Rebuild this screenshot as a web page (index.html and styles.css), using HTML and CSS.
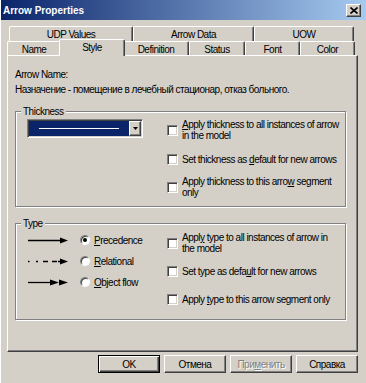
FILE: index.html
```html
<!DOCTYPE html>
<html lang="ru">
<head>
    <meta charset="UTF-8">
    <title>Arrow Properties</title>
    <link rel="stylesheet" href="styles.css">
</head>
<body>
    <div class="window">
        <div class="titlebar">
            <span class="title">Arrow Properties</span>
            <span class="close-btn">
                <svg width="8" height="7" viewBox="0 0 8 7"><path d="M0.5 0.5L7.5 6.5M7.5 0.5L0.5 6.5" stroke="#000" stroke-width="1.6"/></svg>
            </span>
        </div>

        <div class="tabs">
            <div class="tab-row back-row">
                <div class="tab">UDP Values</div>
                <div class="tab">Arrow Data</div>
                <div class="tab">UOW</div>
            </div>
            <div class="tab-row front-row">
                <div class="tab">Name</div>
                <div class="tab active">Style</div>
                <div class="tab">Definition</div>
                <div class="tab">Status</div>
                <div class="tab">Font</div>
                <div class="tab">Color</div>
            </div>
        </div>

        <div class="page">
            <div class="field-label">Arrow Name:</div>
            <div class="field-value">Назначение - помещение в лечебный стационар, отказ больного.</div>

            <div class="group group-thickness">
                <div class="group-title">Thickness</div>
                <div class="group-body">
                    <div class="combo">
                        <div class="combo-value"><span class="line-sample"></span></div>
                        <div class="combo-btn">
                            <svg width="5" height="3" viewBox="0 0 5 3"><path d="M0 0H5L2.5 3Z" fill="#000"/></svg>
                        </div>
                    </div>
                    <div class="checks">
                        <div class="check row-1"><span class="box"></span><span class="check-text"><u>A</u>pply thickness to all instances of arrow<br>in the model</span></div>
                        <div class="check row-2"><span class="box"></span><span class="check-text">Set thickness as <u>d</u>efault for new arrows</span></div>
                        <div class="check row-3"><span class="box"></span><span class="check-text">Apply thickness to this arro<u>w</u> segment<br>only</span></div>
                    </div>
                </div>
            </div>

            <div class="group group-type">
                <div class="group-title">Type</div>
                <div class="group-body">
                    <div class="arrow-types">
                        <div class="arrow-row">
                            <svg class="arrow" width="41" height="9" viewBox="0 0 41 9">
                                <path d="M0 4.5H33" stroke="#000" stroke-width="1.3"/>
                                <path d="M32 1.5L40 4.5L32 7.5Z" fill="#000"/>
                            </svg>
                            <span class="radio checked"></span>
                            <span class="radio-text"><u>P</u>recedence</span>
                        </div>
                        <div class="arrow-row">
                            <svg class="arrow" width="41" height="9" viewBox="0 0 41 9">
                                <path d="M0 4.5H1.5M8 4.5H10M15 4.5H20M24 4.5H29M30 4.5H33" stroke="#000" stroke-width="1.3"/>
                                <path d="M32 1.5L40 4.5L32 7.5Z" fill="#000"/>
                            </svg>
                            <span class="radio"></span>
                            <span class="radio-text"><u>R</u>elational</span>
                        </div>
                        <div class="arrow-row">
                            <svg class="arrow" width="41" height="9" viewBox="0 0 41 9">
                                <path d="M0 4.5H24" stroke="#000" stroke-width="1.3"/>
                                <path d="M22 1.5L31 4.5L22 7.5Z" fill="#000"/>
                                <path d="M31 1.5L40 4.5L31 7.5Z" fill="#000"/>
                            </svg>
                            <span class="radio"></span>
                            <span class="radio-text"><u>O</u>bject flow</span>
                        </div>
                    </div>
                    <div class="checks">
                        <div class="check row-1"><span class="box"></span><span class="check-text">Appl<u>y</u> type to all instances of arrow in<br>the model</span></div>
                        <div class="check row-2"><span class="box"></span><span class="check-text">Set type as defa<u>u</u>lt for new arrows</span></div>
                        <div class="check row-3"><span class="box"></span><span class="check-text">Apply <u>t</u>ype to this arrow segment only</span></div>
                    </div>
                </div>
            </div>
        </div>

        <div class="buttons">
            <button class="btn default">OK</button>
            <button class="btn">Отмена</button>
            <button class="btn disabled">При<u>м</u>енить</button>
            <button class="btn">Справка</button>
        </div>
    </div>
</body>
</html>
```

FILE: styles.css
```css
body {
    margin: 0;
    background: #d4d0c8;
    font-family: "Liberation Sans", Arial, sans-serif;
    font-size: 10px;
    letter-spacing: -0.5px;
    color: #000;
}

.window {
    width: 366px;
    height: 383px;
    box-sizing: border-box;
    border-left: 1px solid #fff;
    display: flex;
    flex-direction: column;
}

/* title bar */

.titlebar {
    height: 20px;
    display: flex;
    align-items: center;
    justify-content: space-between;
    padding: 0 5px 0 2px;
    background: linear-gradient(to right, #0a246a, #a6caf0);
}

.title {
    color: #fff;
    font-weight: bold;
    letter-spacing: 0;
}

.close-btn {
    width: 15px;
    height: 13px;
    box-sizing: border-box;
    display: flex;
    align-items: center;
    justify-content: center;
    background: #d4d0c8;
    border: 1px solid;
    border-color: #fff #404040 #404040 #fff;
    box-shadow: inset -1px -1px #808080;
}

/* tabs */

.tabs {
    margin-top: 6px;
}

.tab-row {
    display: grid;
}

.back-row {
    height: 15px;
    margin-left: 8px;
    grid-template-columns: 124px 121px 100px;
}

.front-row {
    height: 14px;
    margin-left: 6px;
    grid-template-columns: 54px 62px 66px 56px 55px 55px;
}

.tab {
    box-sizing: border-box;
    display: flex;
    align-items: center;
    justify-content: center;
    background: #d4d0c8;
    border-top: 1px solid #fff;
    border-left: 1px solid #fff;
    border-right: 1px solid #404040;
    box-shadow: inset -1px 0 #808080;
    border-radius: 2px 2px 0 0;
}

.tab.active {
    position: relative;
    z-index: 1;
    height: 17px;
    margin: -2px -2px 0 -2px;
    padding-bottom: 2px;
}

/* page */

.page {
    margin-left: 6px;
    width: 351px;
    height: 297px;
    box-sizing: border-box;
    padding: 13px 0 0 7px;
    border-top: 1px solid #fff;
    border-left: 1px solid #fff;
    border-right: 1px solid #404040;
    border-bottom: 1px solid #404040;
    box-shadow: inset -1px -1px #808080;
}

.field-label,
.field-value {
    line-height: 11px;
}

.field-value {
    margin-top: 4px;
}

/* group boxes */

.group {
    width: 331px;
    box-sizing: border-box;
    border: 1px solid #808080;
    box-shadow: inset 1px 1px #fff, 1px 1px #fff;
}

.group-thickness {
    margin-top: 16px;
    height: 96px;
}

.group-type {
    margin-top: 16px;
    height: 97px;
}

.group-title {
    width: fit-content;
    margin: -6px 0 0 5px;
    padding: 0 2px;
    line-height: 11px;
    background: #d4d0c8;
}

.group-body {
    display: flex;
    align-items: flex-start;
    padding-left: 11px;
}

.group-thickness .group-body {
    margin-top: 2px;
}

.group-type .group-body {
    margin-top: 1px;
}

/* combo box */

.combo {
    width: 116px;
    height: 19px;
    box-sizing: border-box;
    display: flex;
    background: #fff;
    border: 1px solid;
    border-color: #808080 #fff #fff #808080;
    box-shadow: inset 1px 1px #404040, inset -1px -1px #d4d0c8;
    padding: 1px;
}

.combo-value {
    flex: 1;
    display: flex;
    align-items: center;
    justify-content: center;
    background: #0a246a;
}

.line-sample {
    width: 80px;
    height: 1px;
    background: #fff;
}

.combo-btn {
    width: 12px;
    box-sizing: border-box;
    display: flex;
    align-items: center;
    justify-content: center;
    background: #d4d0c8;
    border: 1px solid;
    border-color: #fff #404040 #404040 #fff;
    box-shadow: inset -1px -1px #808080;
}

/* check boxes */

.checks {
    display: flex;
    flex-direction: column;
}

.group-thickness .checks {
    margin-left: 24px;
}

.check {
    display: flex;
    align-items: center;
    line-height: 11px;
}

.box {
    width: 11px;
    height: 11px;
    flex-shrink: 0;
    box-sizing: border-box;
    margin-right: 4px;
    background: #fff;
    border: 1px solid;
    border-color: #808080 #fff #fff #808080;
    box-shadow: inset 1px 1px #404040, inset -1px -1px #d4d0c8;
}

.group-thickness .row-2 { margin-top: 13px; }
.group-thickness .row-3 { margin-top: 11px; }

.group-type .row-1 { margin-top: 2px; }
.group-type .row-2 { margin-top: 12px; }
.group-type .row-3 { margin-top: 17px; }

/* arrow types */

.arrow-types {
    width: 140px;
    display: flex;
    flex-direction: column;
    gap: 1px;
}

.arrow-row {
    height: 20px;
    display: flex;
    align-items: center;
}

.arrow {
    margin-left: 1px;
}

.radio {
    width: 10px;
    height: 10px;
    box-sizing: border-box;
    margin-left: 11px;
    border-radius: 50%;
    background: #fff;
    border: 1px solid;
    border-color: #808080 #fff #fff #808080;
    box-shadow: inset 1px 1px #404040;
    display: flex;
    align-items: center;
    justify-content: center;
}

.radio.checked::after {
    content: '';
    width: 4px;
    height: 4px;
    border-radius: 50%;
    background: #000;
}

.radio-text {
    margin-left: 4px;
    line-height: 11px;
}

/* buttons */

.buttons {
    margin-top: 3px;
    padding-right: 8px;
    display: flex;
    justify-content: flex-end;
    gap: 4px;
}

.btn {
    width: 62px;
    height: 18px;
    padding: 0;
    font: inherit;
    letter-spacing: -0.5px;
    color: #000;
    background: #d4d0c8;
    border: 1px solid;
    border-color: #fff #404040 #404040 #fff;
    box-shadow: inset -1px -1px #808080;
}

.btn.default {
    border-color: #000;
    box-shadow: inset 1px 1px #fff, inset -1px -1px #404040, inset -2px -2px #808080;
}

.btn.disabled {
    color: #808080;
    text-shadow: 1px 1px #fff;
}
```
